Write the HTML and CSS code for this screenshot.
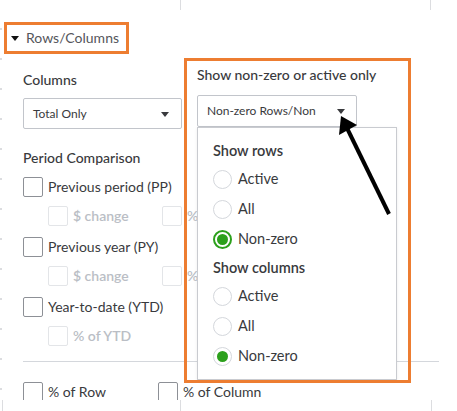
FILE: index.html
```html
<!DOCTYPE html>
<html lang="en">
<head>
<meta charset="utf-8">
<title>Rows/Columns</title>
<link rel="stylesheet" href="styles.css">
</head>
<body>
<div class="canvas">
  <div class="panel">
    <div class="top-strip"><span class="seg seg-a"></span><span class="seg seg-b"></span></div>
    <div class="section-head">
      <span class="caret"></span>
      <span class="section-title">Rows/Columns</span>
    </div>
    <div class="settings">
      <div class="two-col">
        <div class="col-left">
          <div class="label label-cols">Columns</div>
          <div class="select select-total"><span>Total Only</span><span class="tri"></span></div>
        </div>
        <div class="col-right">
          <div class="label label-nz">Show non-zero or active only</div>
          <div class="select select-nz"><span>Non-zero Rows/Non</span><span class="tri"></span></div>
        </div>
      </div>
      <div class="label label-period">Period Comparison</div>
      <div class="check-row main"><span class="box"></span><span>Previous period (PP)</span></div>
      <div class="check-row sub">
        <span class="sub-item first"><span class="box light"></span><span>$ change</span></span>
        <span class="sub-item"><span class="box light"></span><span class="cut">% change</span></span>
      </div>
      <div class="check-row main"><span class="box"></span><span>Previous year (PY)</span></div>
      <div class="check-row sub">
        <span class="sub-item first"><span class="box light"></span><span>$ change</span></span>
        <span class="sub-item"><span class="box light"></span><span class="cut">% change</span></span>
      </div>
      <div class="check-row main"><span class="box"></span><span>Year-to-date (YTD)</span></div>
      <div class="check-row sub">
        <span class="sub-item first"><span class="box light"></span><span>% of YTD</span></span>
      </div>
      <div class="divider"></div>
      <div class="check-row bottom">
        <span class="bottom-item first"><span class="box"></span><span>% of Row</span></span>
        <span class="bottom-item"><span class="box"></span><span>% of Column</span></span>
      </div>
    </div>
  </div>
  <div class="bottom-strip"><span class="seg seg-c"></span><span class="seg seg-d"></span><span class="seg seg-e"></span></div>

  <div class="menu">
    <div class="menu-head">Show rows</div>
    <div class="radio-row"><span class="radio"></span><span>Active</span></div>
    <div class="radio-row"><span class="radio"></span><span>All</span></div>
    <div class="radio-row"><span class="radio on focus"></span><span>Non-zero</span></div>
    <div class="menu-head cols">Show columns</div>
    <div class="radio-row"><span class="radio"></span><span>Active</span></div>
    <div class="radio-row"><span class="radio"></span><span>All</span></div>
    <div class="radio-row"><span class="radio on"></span><span>Non-zero</span></div>
  </div>
  <div class="hl hl-menu"></div>
  <svg class="pointer" width="457" height="411" viewBox="0 0 457 411">
    <line x1="389" y1="214" x2="345" y2="124" stroke="#000" stroke-width="4" stroke-linecap="butt"/>
    <polygon points="341,116 339,135 357,125" fill="#000"/>
  </svg>
</div>
</body>
</html>
```
FILE: styles.css
```css
* { box-sizing: border-box; }
html, body { margin: 0; padding: 0; background: #fff; }
body {
  width: 457px;
  height: 411px;
  overflow: hidden;
  font-family: "Lato", "Open Sans", sans-serif;
  color: #393a3d;
  font-size: 14px;
  line-height: 20px;
}
.canvas { position: relative; width: 457px; height: 411px; }
.panel {
  height: 400px;
  overflow: hidden;
  background-image: repeating-linear-gradient(to bottom, transparent 0 28px, #dcdde0 28px 30px);
  background-size: 2px 100%;
  background-repeat: no-repeat;
}
.top-strip, .bottom-strip { display: flex; height: 10px; }
.bottom-strip { height: 11px; }
.seg { display: block; width: 1px; height: 100%; background: #dcdde0; }
.seg-a { margin-left: 180px; }
.seg-b { margin-left: 249px; }
.seg-c { margin-left: 2px; }
.seg-d { margin-left: 177px; }
.seg-e { margin-left: 250px; }

.section-head {
  margin: 12px 0 0 4px;
  width: 125px;
  height: 32px;
  border: 3px solid #ed7d31;
  display: flex;
  align-items: center;
  padding-left: 4px;
  color: #55565b;
}
.caret {
  width: 0; height: 0;
  border-left: 4.5px solid transparent;
  border-right: 4.5px solid transparent;
  border-top: 5px solid #111;
  margin-right: 7px;
  margin-top: 1px;
}
.section-title { font-size: 14px; }

.settings { padding-left: 23px; }
.two-col { display: flex; gap: 15px; }
.col-left { width: 159px; }
.col-right { width: 200px; }
.label { font-weight: 500; }
.label-cols { margin-top: 16px; }
.label-nz { margin-top: 11px; font-weight: 500; }
.select {
  display: flex;
  align-items: center;
  justify-content: space-between;
  border: 1px solid #c2c5cb;
  border-radius: 2px;
  font-size: 12px;
  color: #393a3d;
  padding: 0 12px 0 9px;
}
.select-total { margin-top: 8px; height: 31px; }
.select-nz { margin-top: 10px; height: 32px; width: 160px; padding-right: 11px; }
.tri {
  width: 0; height: 0;
  border-left: 4px solid transparent;
  border-right: 4px solid transparent;
  border-top: 5px solid #393a3d;
  margin-top: 1px;
}
.label-period { margin-top: 19px; }

.check-row { display: flex; align-items: center; height: 20px; }
.check-row.main { margin-top: 9px; }
.check-row.main + .check-row.sub { margin-top: 9px; }
.check-row.sub + .check-row.main { margin-top: 11px; }
.box {
  width: 20px; height: 20px;
  border: 1px solid #8d9096;
  border-radius: 2px;
  background: #fff;
  margin-right: 5px;
  flex: none;
}
.box.light { border-color: #e3e5e8; }
.sub-item { display: flex; align-items: center; color: #babec5; font-weight: 600; }
.sub-item.first { margin-left: 25px; width: 114px; }
.cut { display: block; width: 10px; overflow: hidden; white-space: nowrap; }
.divider { margin-top: 15px; height: 1px; width: 416px; background: #d4d7dc; }
.check-row.bottom { margin-top: 20px; }
.bottom-item { display: flex; align-items: center; }
.bottom-item.first { width: 135px; }

.menu {
  position: absolute;
  left: 197px;
  top: 127px;
  width: 200px;
  height: 253px;
  background: #fff;
  border: 1px solid #c9cbd0;
  box-shadow: 0 1px 3px rgba(0,0,0,0.08);
  padding: 13px 0 0 15px;
  font-size: 14.5px;
}
.menu-head { font-weight: 600; height: 20px; margin-bottom: 3px; }
.menu-head.cols { margin-top: 4px; }
.radio-row { display: flex; align-items: center; height: 30px; }
.radio {
  width: 19px; height: 19px;
  border-radius: 50%;
  border: 1px solid #d4d7dc;
  background: #fff;
  margin-right: 6px;
  flex: none;
  position: relative;
}
.radio.on::after {
  content: "";
  position: absolute;
  left: 50%; top: 50%;
  width: 11px; height: 11px;
  margin: -5.5px 0 0 -5.5px;
  border-radius: 50%;
  background: #2ca01c;
}
.radio.focus { border: 2px solid #2ca01c; }

.hl {
  position: absolute;
  border: 3px solid #ed7d31;
  pointer-events: none;
}
.hl-menu { left: 184px; top: 58px; width: 227px; height: 325px; }
.pointer { position: absolute; left: 0; top: 0; pointer-events: none; }
```
